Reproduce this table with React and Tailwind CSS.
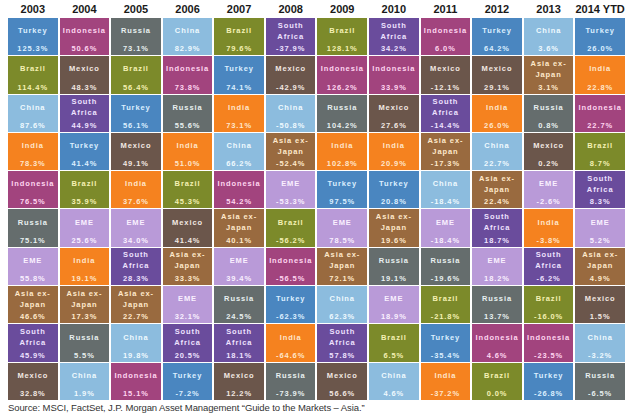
const C = {
  Turkey: { bg: 'bg-[#4a86c0]', fg: 'text-[#dcefff]' },
  Indonesia: { bg: 'bg-[#a2447e]', fg: 'text-[#ffd6f0]' },
  Russia: { bg: 'bg-[#656d6d]', fg: 'text-[#e8f0f0]' },
  China: { bg: 'bg-[#8cbcde]', fg: 'text-[#effaff]' },
  Brazil: { bg: 'bg-[#7c8a2a]', fg: 'text-[#f4f1b4]' },
  Mexico: { bg: 'bg-[#6b564b]', fg: 'text-[#f2e8e2]' },
  'South Africa': { bg: 'bg-[#6a4c9c]', fg: 'text-[#eee2ff]' },
  India: { bg: 'bg-[#f5821f]', fg: 'text-[#ffe6cc]' },
  EME: { bg: 'bg-[#b99ad8]', fg: 'text-[#faf0ff]' },
  'Asia ex-Japan': { bg: 'bg-[#996a3f]', fg: 'text-[#ffe9cc]' },
};

const LINES = {
  'South Africa': ['South', 'Africa'],
  'Asia ex-Japan': ['Asia ex-', 'Japan'],
};

const data = [
  ['2003', [['Turkey', '125.3%'], ['Brazil', '114.4%'], ['China', '87.6%'], ['India', '78.3%'], ['Indonesia', '76.5%'], ['Russia', '75.1%'], ['EME', '55.8%'], ['Asia ex-Japan', '46.6%'], ['South Africa', '45.9%'], ['Mexico', '32.8%']]],
  ['2004', [['Indonesia', '50.6%'], ['Mexico', '48.3%'], ['South Africa', '44.9%'], ['Turkey', '41.4%'], ['Brazil', '35.9%'], ['EME', '25.6%'], ['India', '19.1%'], ['Asia ex-Japan', '17.3%'], ['Russia', '5.5%'], ['China', '1.9%']]],
  ['2005', [['Russia', '73.1%'], ['Brazil', '56.4%'], ['Turkey', '56.1%'], ['Mexico', '49.1%'], ['India', '37.6%'], ['EME', '34.0%'], ['South Africa', '28.3%'], ['Asia ex-Japan', '22.7%'], ['China', '19.8%'], ['Indonesia', '15.1%']]],
  ['2006', [['China', '82.9%'], ['Indonesia', '73.8%'], ['Russia', '55.6%'], ['India', '51.0%'], ['Brazil', '45.3%'], ['Mexico', '41.4%'], ['Asia ex-Japan', '33.3%'], ['EME', '32.1%'], ['South Africa', '20.5%'], ['Turkey', '-7.2%']]],
  ['2007', [['Brazil', '79.6%'], ['Turkey', '74.1%'], ['India', '73.1%'], ['China', '66.2%'], ['Indonesia', '54.2%'], ['Asia ex-Japan', '40.1%'], ['EME', '39.4%'], ['Russia', '24.5%'], ['South Africa', '18.1%'], ['Mexico', '12.2%']]],
  ['2008', [['South Africa', '-37.9%'], ['Mexico', '-42.9%'], ['China', '-50.8%'], ['Asia ex-Japan', '-52.4%'], ['EME', '-53.3%'], ['Brazil', '-56.2%'], ['Indonesia', '-56.5%'], ['Turkey', '-62.3%'], ['India', '-64.6%'], ['Russia', '-73.9%']]],
  ['2009', [['Brazil', '128.1%'], ['Indonesia', '126.2%'], ['Russia', '104.2%'], ['India', '102.8%'], ['Turkey', '97.5%'], ['EME', '78.5%'], ['Asia ex-Japan', '72.1%'], ['China', '62.3%'], ['South Africa', '57.8%'], ['Mexico', '56.6%']]],
  ['2010', [['South Africa', '34.2%'], ['Indonesia', '33.9%'], ['Mexico', '27.6%'], ['India', '20.9%'], ['Turkey', '20.8%'], ['Asia ex-Japan', '19.6%'], ['Russia', '19.1%'], ['EME', '18.9%'], ['Brazil', '6.5%'], ['China', '4.6%']]],
  ['2011', [['Indonesia', '6.0%'], ['Mexico', '-12.1%'], ['South Africa', '-14.4%'], ['Asia ex-Japan', '-17.3%'], ['China', '-18.4%'], ['EME', '-18.4%'], ['Russia', '-19.6%'], ['Brazil', '-21.8%'], ['Turkey', '-35.4%'], ['India', '-37.2%']]],
  ['2012', [['Turkey', '64.2%'], ['Mexico', '29.1%'], ['India', '26.0%'], ['China', '22.7%'], ['Asia ex-Japan', '22.4%'], ['South Africa', '18.7%'], ['EME', '18.2%'], ['Russia', '13.7%'], ['Indonesia', '4.6%'], ['Brazil', '0.0%']]],
  ['2013', [['China', '3.6%'], ['Asia ex-Japan', '3.1%'], ['Russia', '0.8%'], ['Mexico', '0.2%'], ['EME', '-2.6%'], ['India', '-3.8%'], ['South Africa', '-6.2%'], ['Brazil', '-16.0%'], ['Indonesia', '-23.5%'], ['Turkey', '-26.8%']]],
  ['2014 YTD', [['Turkey', '26.0%'], ['India', '22.8%'], ['Indonesia', '22.7%'], ['Brazil', '8.7%'], ['South Africa', '8.3%'], ['EME', '5.2%'], ['Asia ex-Japan', '4.9%'], ['Mexico', '1.5%'], ['China', '-3.2%'], ['Russia', '-6.5%']]],
];

function Cell({ name, value }) {
  const c = C[name];
  const lines = LINES[name] || [name];
  return (
    <div className={`${c.bg} ${c.fg} flex-1 flex flex-col text-[7.5px] font-bold tracking-[0.9px] leading-[11px] text-center`}>
      <div className="flex-1 flex flex-col justify-center">
        {lines.map((l) => (
          <div key={l} className="whitespace-nowrap">{l}</div>
        ))}
      </div>
      <div className="h-[12px] pb-[1px]">{value}</div>
    </div>
  );
}

export default function App() {
  return (
    <div className="w-[628px] h-[415px] bg-white pl-[8px] font-['Liberation_Sans',Arial,sans-serif]">
      <div className="flex gap-x-[2px] w-[617px]">
        {data.map(([year, cells]) => (
          <div key={year} className="flex-1 flex flex-col">
            <div className="h-[18px] flex items-center justify-center text-[11px] font-bold text-[#1a1a1a]">{year}</div>
            <div className="h-[382px] flex flex-col gap-y-[1px]">
              {cells.map(([n, v]) => (
                <Cell key={n} name={n} value={v} />
              ))}
            </div>
          </div>
        ))}
      </div>
      <div className="text-[9.5px] leading-[13px] text-[#333] tracking-[-0.1px] pt-[1px]">
        Source: MSCI, FactSet, J.P. Morgan Asset Management “Guide to the Markets – Asia.”
      </div>
    </div>
  );
}
